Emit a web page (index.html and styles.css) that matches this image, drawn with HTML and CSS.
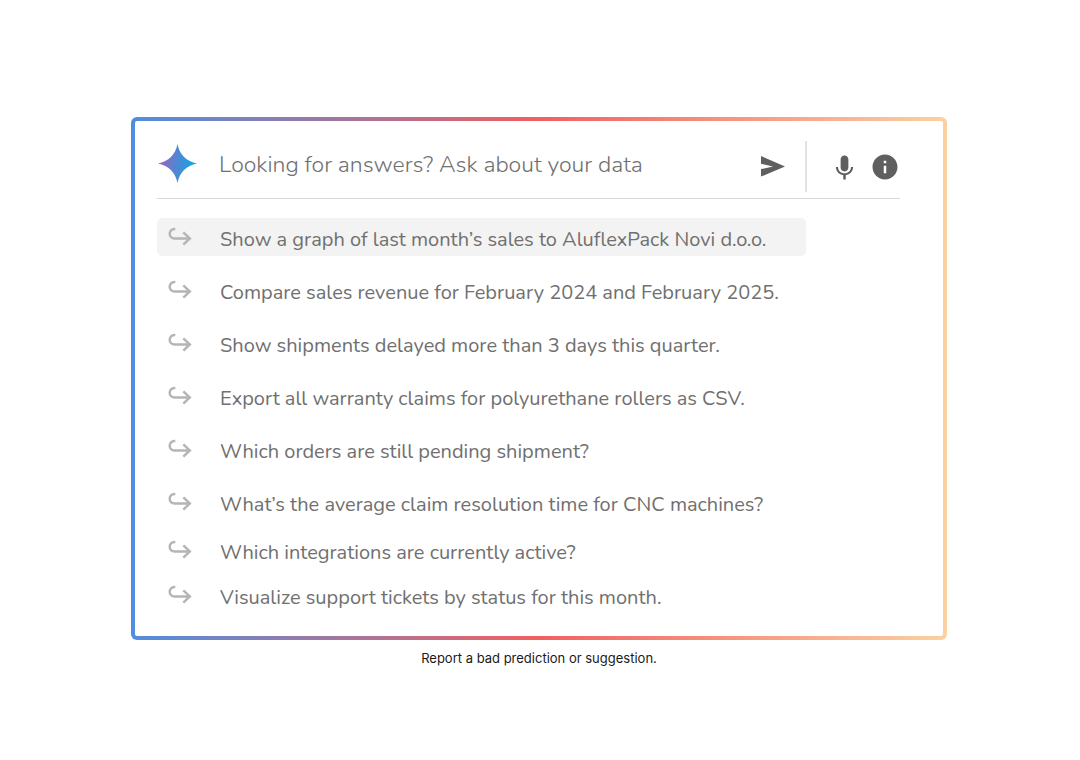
FILE: index.html
```html
<!DOCTYPE html>
<html lang="en">
<head>
<meta charset="utf-8">
<meta name="viewport" content="width=device-width, initial-scale=1">
<title>Ask about your data</title>
<link rel="stylesheet" href="styles.css">
</head>
<body>
<svg class="defs" aria-hidden="true">
  <symbol id="arrow" viewBox="0 0 24 20">
    <path d="M7.3 2H6.4A4.6 4.6 0 0 0 6.4 11.4H21.800M15.3 5.4L21.800 11.4L15.3 17.6" fill="none" stroke="currentColor" stroke-width="2.5"/>
  </symbol>
</svg>
<main class="page">
  <section class="card">
    <form class="search">
      <svg class="spark" viewBox="0 0 39 39" aria-hidden="true">
        <defs>
          <linearGradient id="spark-fill" x1="0" y1="0.4" x2="1" y2="0.5">
            <stop offset="0.05" stop-color="#9a66bd"/>
            <stop offset="0.45" stop-color="#5684d1"/>
            <stop offset="0.85" stop-color="#1ba1e3"/>
          </linearGradient>
        </defs>
        <path d="M19.5 0C21.5 10.5 28.5 17.5 39 19.5C28.5 21.5 21.5 28.5 19.5 39C17.5 28.5 10.5 21.5 0 19.5C10.5 17.5 17.5 10.5 19.5 0Z" fill="url(#spark-fill)"/>
      </svg>
      <input class="query" type="text" aria-label="Ask about your data" placeholder="Looking for answers? Ask about your data">
      <button class="tool send" type="submit" aria-label="Send">
        <svg viewBox="0 0 24 21" width="24" height="21"><path d="M0 0L24 10.4L0 20.6V13.1L12 10.4L0 7.7Z" fill="currentColor"/></svg>
      </button>
      <div class="tools">
        <button class="tool" type="button" aria-label="Voice input">
          <svg viewBox="0 0 24 24" width="30" height="30"><path d="M11.600 15.500c1.940 0 3.100-1.400 3.100-3.300V6c0-1.900-1.160-3.300-3.100-3.300S8.500 4.100 8.500 6v6.200c0 1.900 1.160 3.300 3.100 3.300zM18.500 12h-1.700c0 3-2.300 5-5.200 5s-5.200-2-5.200-5H4.700c0 3.500 2.510 6 5.900 6.600V22h2v-3.400c3.390-.6 5.900-3.100 5.900-6.600z" fill="currentColor"/></svg>
        </button>
        <button class="tool" type="button" aria-label="Information">
          <svg viewBox="0 0 24 24" width="30" height="30"><path d="M12 2C6.480 2 2 6.480 2 12s4.480 10 10 10 10-4.480 10-10S17.520 2 12 2zm1 15h-2v-6h2v6zm0-8h-2V7h2v2z" fill="currentColor"/></svg>
        </button>
      </div>
    </form>
    <ul class="suggestions">
      <li><button class="suggestion active" type="button"><svg class="arrow"><use href="#arrow"/></svg><span>Show a graph of last month’s sales to AluflexPack Novi d.o.o.</span></button></li>
      <li><button class="suggestion" type="button"><svg class="arrow"><use href="#arrow"/></svg><span>Compare sales revenue for February 2024 and February 2025.</span></button></li>
      <li><button class="suggestion" type="button"><svg class="arrow"><use href="#arrow"/></svg><span>Show shipments delayed more than 3 days this quarter.</span></button></li>
      <li><button class="suggestion" type="button"><svg class="arrow"><use href="#arrow"/></svg><span>Export all warranty claims for polyurethane rollers as CSV.</span></button></li>
      <li><button class="suggestion" type="button"><svg class="arrow"><use href="#arrow"/></svg><span>Which orders are still pending shipment?</span></button></li>
      <li><button class="suggestion" type="button"><svg class="arrow"><use href="#arrow"/></svg><span>What’s the average claim resolution time for CNC machines?</span></button></li>
      <li class="tight"><button class="suggestion" type="button"><svg class="arrow"><use href="#arrow"/></svg><span>Which integrations are currently active?</span></button></li>
      <li class="tighter"><button class="suggestion" type="button"><svg class="arrow"><use href="#arrow"/></svg><span>Visualize support tickets by status for this month.</span></button></li>
    </ul>
  </section>
  <a class="report" href="#report">Report a bad prediction or suggestion.</a>
</main>
</body>
</html>
```
FILE: styles.css
```css
* {
  box-sizing: border-box;
}

body {
  margin: 0;
  background: #fff;
  color: #707070;
  font-family: Nunito, Lato, sans-serif;
}

.defs {
  display: none;
}

.page {
  display: flex;
  flex-direction: column;
  align-items: center;
  padding: 117px 24px 48px 22px;
}

.card {
  width: 100%;
  max-width: 816px;
  padding: 20px 43px 22px 22px;
  border: 4px solid transparent;
  border-radius: 6px;
  background:
    linear-gradient(#fff, #fff) padding-box,
    linear-gradient(90deg, #508edf, #f06061 50%, #fbd1a2) border-box;
}

.search {
  display: flex;
  align-items: center;
  padding-bottom: 6px;
  border-bottom: 1px solid #d8d8d8;
}

.spark {
  flex: none;
  width: 39px;
  height: 39px;
  margin: 0 22px 7px 1px;
}

.query {
  flex: 1;
  min-width: 0;
  margin-bottom: 4px;
  padding: 0;
  border: 0;
  outline: 0;
  background: none;
  color: #707070;
  font: 300 23px/32px Nunito, Lato, sans-serif;
}

.query::placeholder {
  color: #707070;
  opacity: 1;
}

.tool {
  display: flex;
  padding: 0;
  border: 0;
  background: none;
  color: #5f5f5f;
  cursor: pointer;
}

.send {
  margin-right: 20px;
}

.tools {
  display: flex;
  align-items: center;
  gap: 10px;
  height: 51px;
  padding-left: 23px;
  border-left: 2px solid #e2e2e2;
}

.suggestions {
  margin: 19px 0 0;
  padding: 0;
  list-style: none;
}

.suggestions li + li {
  margin-top: 15px;
}

.suggestions .tight {
  margin-top: 10px;
}

.suggestions .tighter {
  margin-top: 7px;
}

.suggestion {
  display: flex;
  align-items: center;
  gap: 28px;
  width: 100%;
  max-width: 649px;
  min-height: 38px;
  padding: 0 11px;
  border: 0;
  border-radius: 5px;
  background: none;
  color: #707070;
  font: 400 20px/28px Nunito, Lato, sans-serif;
  text-align: left;
  cursor: pointer;
}

.suggestion span {
  padding-top: 5px;
}

.suggestion.active {
  background: #f3f3f3;
}

.arrow {
  flex: none;
  width: 24px;
  height: 20px;
  color: #b5b5b5;
}

.report {
  margin-top: 9px;
  color: #1a1a1a;
  font: 400 13px/18px Inter, sans-serif;
  text-decoration: none;
}
```
